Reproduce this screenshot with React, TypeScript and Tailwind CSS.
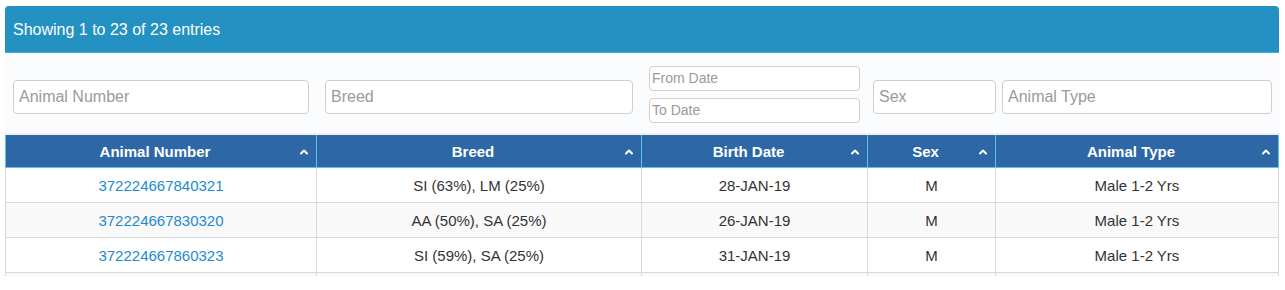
import { ChevronUp } from "lucide-react";

// ── Data ──────────────────────────────────────────────────────────────────────

interface Animal {
  number: string;
  breed: string;
  birth: string;
  sex: string;
  type: string;
}

const ANIMALS: Animal[] = [
  { number: "372224667840321", breed: "SI (63%), LM (25%)", birth: "28-JAN-19", sex: "M", type: "Male 1-2 Yrs" },
  { number: "372224667830320", breed: "AA (50%), SA (25%)", birth: "26-JAN-19", sex: "M", type: "Male 1-2 Yrs" },
  { number: "372224667860323", breed: "SI (59%), SA (25%)", birth: "31-JAN-19", sex: "M", type: "Male 1-2 Yrs" },
];

const COLUMNS = [
  { label: "Animal Number", width: "w-[311px]" },
  { label: "Breed", width: "w-[325px]" },
  { label: "Birth Date", width: "w-[226px]" },
  { label: "Sex", width: "w-[128px]" },
  { label: "Animal Type", width: "flex-1" },
];

const inputCls =
  "rounded-[4px] border border-[#cfcfcf] bg-white text-[#333] outline-none placeholder:text-[#9a9a9a]";

// ── Component ─────────────────────────────────────────────────────────────────

export default function App() {
  return (
    <div className="h-[290px] w-[1285px] overflow-hidden bg-white pt-[6px] pl-[5px] pr-[6px] font-['Liberation_Sans',Arial,sans-serif]">
      {/* Panel heading */}
      <div className="flex h-[47px] items-center rounded-t-[4px] border-b border-[#4aa8d6] bg-[#2391c1] pt-[2px] pl-[8px] text-[16px] text-white">
        Showing 1 to 23 of 23 entries
      </div>

      {/* Filters */}
      <div className="flex h-[80px] items-center bg-[#fbfcfd] pl-[8px]">
        <input placeholder="Animal Number" className={`${inputCls} mt-[8px] h-[34px] w-[296px] px-[5px] text-[16px]`} />
        <input placeholder="Breed" className={`${inputCls} mt-[8px] ml-[16px] h-[34px] w-[308px] px-[5px] text-[16px]`} />
        <div className="ml-[16px] mt-[2px] flex flex-col gap-[7px]">
          <input placeholder="From Date" className={`${inputCls} h-[25px] w-[211px] px-[2px] text-[14px]`} />
          <input placeholder="To Date" className={`${inputCls} h-[25px] w-[211px] px-[2px] text-[14px]`} />
        </div>
        <input placeholder="Sex" className={`${inputCls} mt-[8px] ml-[13px] h-[34px] w-[123px] px-[5px] text-[16px]`} />
        <input placeholder="Animal Type" className={`${inputCls} mt-[8px] ml-[6px] h-[34px] w-[270px] px-[5px] text-[16px]`} />
      </div>

      {/* Table */}
      <div className="border-t-2 border-[#eef0f2]">
        <div className="flex h-[33px] border-x border-b border-[#5ec3ec] bg-[#2d67a6] text-[15px] font-bold text-white">
          {COLUMNS.map((c, i) => (
            <div
              key={c.label}
              className={`relative flex items-center justify-center pt-[2px] pr-[12px] ${c.width} ${
                i < COLUMNS.length - 1 ? "border-r border-[#5ec3ec]" : ""
              }`}
            >
              {c.label}
              <ChevronUp size={12} strokeWidth={4} className="absolute right-[6px] top-[11px]" />
            </div>
          ))}
        </div>

        {ANIMALS.map((a, r) => (
          <div
            key={a.number}
            className={`flex h-[35px] border-x border-b border-[#d6dadd] text-[15px] text-[#333] ${
              r % 2 === 1 ? "bg-[#f9f9f9]" : "bg-white"
            }`}
          >
            {[a.number, a.breed, a.birth, a.sex, a.type].map((v, i) => (
              <div
                key={i}
                className={`flex items-center justify-center pt-[3px] ${COLUMNS[i].width} ${
                  i < COLUMNS.length - 1 ? "border-r border-[#d6dadd]" : ""
                }`}
              >
                {i === 0 ? <a className="text-[#1d8ad0]">{v}</a> : v}
              </div>
            ))}
          </div>
        ))}

        {/* top sliver of the next row, cut off by the viewport */}
        <div className="flex h-[3px] border-x border-[#d6dadd] bg-[#f9f9f9]">
          {COLUMNS.map((c, i) => (
            <div
              key={c.label}
              className={`${c.width} ${i < COLUMNS.length - 1 ? "border-r border-[#d6dadd]" : ""}`}
            />
          ))}
        </div>
      </div>
    </div>
  );
}
